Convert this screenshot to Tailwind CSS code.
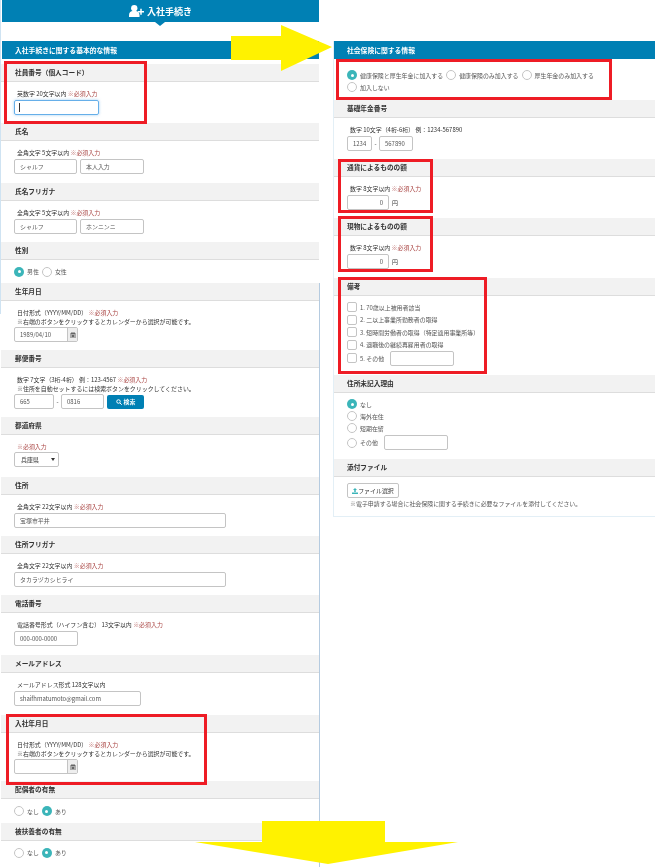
<!DOCTYPE html>
<html lang="ja">
<head>
    <meta charset="UTF-8">
    <meta name="viewport" content="width=device-width, initial-scale=1.0">
    <title>入社手続き</title>
    <script src="https://cdn.jsdelivr.net/npm/@tailwindcss/browser@4"></script>
</head>
<body class="bg-white">
    <div class="relative w-[655px] h-[867px] overflow-hidden flex font-['Noto_Sans_CJK_JP','Noto_Sans',sans-serif] text-[5.95px] leading-[9px] text-[#333] blur-[0.35px]">

        <!-- Left column -->
        <div class="w-[319px] pl-[1px] shrink-0">
            <div class="relative h-[22px] ml-[1px] bg-[#0080b4] flex items-center justify-center gap-[3px] text-white font-bold text-[9px]">
                <svg viewBox="0 0 20 16" class="w-[15px] h-[12px] fill-white"><circle cx="7" cy="4.2" r="4.2"/><path d="M0 16v-2.5C0 10 2.5 8 5 8h4c2.5 0 5 2 5 5.500V16z"/><path d="M15 5h2v3h3v2h-3v3h-2v-3h-3V8h3z"/></svg>
                <span>入社手続き</span>
                <div class="absolute left-[153px] top-[22px] w-0 h-0 border-x-[5px] border-x-transparent border-t-[4px] border-t-[#0080b4]"></div>
            </div>
            <div class="mt-[19px] h-[18px] ml-[1px] bg-[#0080b4] text-white font-bold text-[6.8px] flex items-center pl-[13px]">入社手続きに関する基本的な情報</div>

            <!-- 社員番号 -->
            <div class="mt-[5px] h-[18px] bg-[#f2f2f2] border-b border-[#ddd] pl-[14px] flex items-center font-bold text-[6.7px]">社員番号（個人コード）</div>
            <div class="h-[41px] pl-[13px] pt-[7px]">
                <p class="pl-[3px]">英数字 20文字以内 <span class="text-[#a94442]">※必須入力</span></p>
                <div class="mt-[2px] w-[85px] h-[15px] border border-[#66afe9] rounded-[2px] shadow-[0_0_3px_rgba(102,175,233,0.6)] flex items-center pl-[4px]"><div class="w-px h-[9px] bg-[#333]"></div></div>
            </div>

            <!-- 氏名 -->
            <div class="h-[18px] bg-[#f2f2f2] border-b border-[#ddd] pl-[14px] flex items-center font-bold text-[6.7px]">氏名</div>
            <div class="h-[42px] pl-[13px] pt-[7px]">
                <p class="pl-[3px]">全角文字 5文字以内 <span class="text-[#a94442]">※必須入力</span></p>
                <div class="mt-[2px] flex gap-[3px]">
                    <input value="シャルフ" class="w-[63px] h-[15px] border border-[#c4c4c4] rounded-[2px] px-[5px] text-[#555]">
                    <input value="本人入力" class="w-[64px] h-[15px] border border-[#c4c4c4] rounded-[2px] px-[5px] text-[#555]">
                </div>
            </div>

            <!-- 氏名フリガナ -->
            <div class="h-[18px] bg-[#f2f2f2] border-b border-[#ddd] pl-[14px] flex items-center font-bold text-[6.7px]">氏名フリガナ</div>
            <div class="h-[41px] pl-[13px] pt-[7px]">
                <p class="pl-[3px]">全角文字 5文字以内 <span class="text-[#a94442]">※必須入力</span></p>
                <div class="mt-[2px] flex gap-[3px]">
                    <input value="シャルフ" class="w-[63px] h-[15px] border border-[#c4c4c4] rounded-[2px] px-[5px] text-[#555]">
                    <input value="ホンニンニ" class="w-[64px] h-[15px] border border-[#c4c4c4] rounded-[2px] px-[5px] text-[#555]">
                </div>
            </div>

            <!-- 性別 -->
            <div class="h-[18px] bg-[#f2f2f2] border-b border-[#ddd] pl-[14px] flex items-center font-bold text-[6.7px]">性別</div>
            <div class="h-[23px] pl-[13px] flex items-center gap-[3px] text-[#555]">
                <span class="w-[10px] h-[10px] rounded-full bg-[#3bb5b9] flex items-center justify-center"><span class="w-[3px] h-[3px] rounded-full bg-white"></span></span>
                <span>男性</span>
                <span class="w-[10px] h-[10px] rounded-full border border-[#c4c4c4]"></span>
                <span>女性</span>
            </div>

            <!-- 生年月日 -->
            <div class="h-[18px] bg-[#f2f2f2] border-b border-[#ddd] pl-[14px] flex items-center font-bold text-[6.7px]">生年月日</div>
            <div class="h-[49px] pl-[13px] pt-[7px]">
                <p class="pl-[3px]">日付形式（YYYY/MM/DD） <span class="text-[#a94442]">※必須入力</span></p>
                <p class="pl-[3px]">※右端のボタンをクリックするとカレンダーから選択が可能です。</p>
                <div class="mt-[1px] w-[64px] h-[15px] border border-[#c4c4c4] rounded-[2px] flex">
                    <input value="1989/04/10" class="w-[52px] px-[5px] text-[#555]">
                    <div class="flex-1 bg-[#eee] border-l border-[#c4c4c4] flex items-center justify-center">
                        <svg viewBox="0 0 12 12" class="w-[6px] h-[6px] fill-[#666]"><path d="M1 2h2V0h2v2h2V0h2v2h2v10H1zm1 3v6h8V5z"/><path d="M3 6h6v4H3z"/></svg>
                    </div>
                </div>
            </div>

            <!-- 郵便番号 -->
            <div class="h-[18px] bg-[#f2f2f2] border-b border-[#ddd] pl-[14px] flex items-center font-bold text-[6.7px]">郵便番号</div>
            <div class="h-[49px] pl-[13px] pt-[7px]">
                <p class="pl-[3px]">数字 7文字（3桁-4桁） 例：123-4567 <span class="text-[#a94442]">※必須入力</span></p>
                <p class="pl-[3px]">※住所を自動セットするには検索ボタンをクリックしてください。</p>
                <div class="mt-[1px] flex items-center">
                    <input value="665" class="w-[40px] h-[15px] border border-[#c4c4c4] rounded-[2px] px-[5px] text-[#555]">
                    <span class="w-[7px] text-center">-</span>
                    <input value="0816" class="w-[43px] h-[15px] border border-[#c4c4c4] rounded-[2px] px-[5px] text-[#555]">
                    <button class="ml-[3px] w-[37px] h-[14px] rounded-[2px] bg-[#0080b4] text-white font-bold flex items-center justify-center gap-[2px]">
                        <svg viewBox="0 0 12 12" class="w-[6px] h-[6px] fill-none stroke-white stroke-[2]"><circle cx="5" cy="5" r="3.500"/><path d="M8 8l3.500 3.500"/></svg>
                        <span>検索</span>
                    </button>
                </div>
            </div>

            <!-- 都道府県 -->
            <div class="h-[18px] bg-[#f2f2f2] border-b border-[#ddd] pl-[14px] flex items-center font-bold text-[6.7px]">都道府県</div>
            <div class="h-[42px] pl-[13px] pt-[7px]">
                <p class="pl-[3px] text-[#a94442]">※必須入力</p>
                <div class="relative mt-[1px] w-[45px] h-[15px]">
                    <select class="appearance-none w-full h-full border border-[#c4c4c4] rounded-[2px] pl-[6px] text-[#333]"><option>兵庫県</option></select>
                    <div class="absolute right-[4px] top-[6px] w-0 h-0 border-x-[2px] border-x-transparent border-t-[3px] border-t-[#333]"></div>
                </div>
            </div>

            <!-- 住所 -->
            <div class="h-[18px] bg-[#f2f2f2] border-b border-[#ddd] pl-[14px] flex items-center font-bold text-[6.7px]">住所</div>
            <div class="h-[41px] pl-[13px] pt-[7px]">
                <p class="pl-[3px]">全角文字 22文字以内 <span class="text-[#a94442]">※必須入力</span></p>
                <input value="宝塚市平井" class="mt-[2px] w-[212px] h-[15px] border border-[#c4c4c4] rounded-[2px] px-[5px] text-[#555]">
            </div>

            <!-- 住所フリガナ -->
            <div class="h-[18px] bg-[#f2f2f2] border-b border-[#ddd] pl-[14px] flex items-center font-bold text-[6.7px]">住所フリガナ</div>
            <div class="h-[41px] pl-[13px] pt-[7px]">
                <p class="pl-[3px]">全角文字 22文字以内 <span class="text-[#a94442]">※必須入力</span></p>
                <input value="タカラヅカシヒライ" class="mt-[2px] w-[212px] h-[15px] border border-[#c4c4c4] rounded-[2px] px-[5px] text-[#555]">
            </div>

            <!-- 電話番号 -->
            <div class="h-[18px] bg-[#f2f2f2] border-b border-[#ddd] pl-[14px] flex items-center font-bold text-[6.7px]">電話番号</div>
            <div class="h-[42px] pl-[13px] pt-[7px]">
                <p class="pl-[3px]">電話番号形式（ハイフン含む） 13文字以内 <span class="text-[#a94442]">※必須入力</span></p>
                <input value="000-000-0000" class="mt-[2px] w-[64px] h-[15px] border border-[#c4c4c4] rounded-[2px] px-[5px] text-[#555]">
            </div>

            <!-- メールアドレス -->
            <div class="h-[18px] bg-[#f2f2f2] border-b border-[#ddd] pl-[14px] flex items-center font-bold text-[6.7px]">メールアドレス</div>
            <div class="h-[42px] pl-[13px] pt-[7px]">
                <p class="pl-[3px]">メールアドレス形式 128文字以内</p>
                <input value="shaifhmatumoto@gmail.com" class="mt-[2px] w-[127px] h-[15px] border border-[#c4c4c4] rounded-[2px] px-[5px] text-[#555]">
            </div>

            <!-- 入社年月日 -->
            <div class="h-[18px] bg-[#f2f2f2] border-b border-[#ddd] pl-[14px] flex items-center font-bold text-[6.7px]">入社年月日</div>
            <div class="h-[48px] pl-[13px] pt-[7px]">
                <p class="pl-[3px]">日付形式（YYYY/MM/DD） <span class="text-[#a94442]">※必須入力</span></p>
                <p class="pl-[3px]">※右端のボタンをクリックするとカレンダーから選択が可能です。</p>
                <div class="mt-[1px] w-[64px] h-[15px] border border-[#c4c4c4] rounded-[2px] flex">
                    <input class="w-[52px] px-[5px] text-[#555]">
                    <div class="flex-1 bg-[#eee] border-l border-[#c4c4c4] flex items-center justify-center">
                        <svg viewBox="0 0 12 12" class="w-[6px] h-[6px] fill-[#666]"><path d="M1 2h2V0h2v2h2V0h2v2h2v10H1zm1 3v6h8V5z"/><path d="M3 6h6v4H3z"/></svg>
                    </div>
                </div>
            </div>

            <!-- 配偶者の有無 -->
            <div class="h-[18px] bg-[#f2f2f2] border-b border-[#ddd] pl-[14px] flex items-center font-bold text-[6.7px]">配偶者の有無</div>
            <div class="h-[24px] pl-[13px] flex items-center gap-[3px] text-[#555]">
                <span class="w-[10px] h-[10px] rounded-full border border-[#c4c4c4]"></span>
                <span>なし</span>
                <span class="w-[10px] h-[10px] rounded-full bg-[#3bb5b9] flex items-center justify-center"><span class="w-[3px] h-[3px] rounded-full bg-white"></span></span>
                <span>あり</span>
            </div>

            <!-- 被扶養者の有無 -->
            <div class="h-[18px] bg-[#f2f2f2] border-b border-[#ddd] pl-[14px] flex items-center font-bold text-[6.7px]">被扶養者の有無</div>
            <div class="h-[23px] pl-[13px] flex items-center gap-[3px] text-[#555]">
                <span class="w-[10px] h-[10px] rounded-full border border-[#c4c4c4]"></span>
                <span>なし</span>
                <span class="w-[10px] h-[10px] rounded-full bg-[#3bb5b9] flex items-center justify-center"><span class="w-[3px] h-[3px] rounded-full bg-white"></span></span>
                <span>あり</span>
            </div>
        </div>

        <!-- Right column -->
        <div class="ml-[14px] w-[322px] h-[476px] mt-[41px] border-l border-b border-[#e3eff6]">
            <div class="h-[18px] bg-[#0080b4] text-white font-bold text-[6.8px] flex items-center pl-[13px]">社会保険に関する情報</div>
            <div class="h-[41px] pl-[13px] pt-[10px] text-[#555]">
                <div class="flex items-center gap-[3px] h-[12px]">
                    <span class="w-[10px] h-[10px] rounded-full bg-[#3bb5b9] flex items-center justify-center"><span class="w-[3px] h-[3px] rounded-full bg-white"></span></span>
                    <span>健康保険と厚生年金に加入する</span>
                    <span class="w-[10px] h-[10px] rounded-full border border-[#c4c4c4]"></span>
                    <span>健康保険のみ加入する</span>
                    <span class="w-[10px] h-[10px] rounded-full border border-[#c4c4c4]"></span>
                    <span>厚生年金のみ加入する</span>
                </div>
                <div class="flex items-center gap-[3px] h-[12px]">
                    <span class="w-[10px] h-[10px] rounded-full border border-[#c4c4c4]"></span>
                    <span>加入しない</span>
                </div>
            </div>

            <!-- 基礎年金番号 -->
            <div class="h-[18px] bg-[#f2f2f2] border-b border-[#ddd] pl-[13px] flex items-center font-bold text-[6.7px]">基礎年金番号</div>
            <div class="h-[41px] pl-[13px] pt-[7px]">
                <p class="pl-[3px]">数字 10文字（4桁-6桁） 例：1234-567890</p>
                <div class="mt-[2px] flex items-center">
                    <input value="1234" class="w-[25px] h-[15px] border border-[#c4c4c4] rounded-[2px] px-[5px] text-[#555]">
                    <span class="w-[7px] text-center">-</span>
                    <input value="567890" class="w-[34px] h-[15px] border border-[#c4c4c4] rounded-[2px] px-[5px] text-[#555]">
                </div>
            </div>

            <!-- 通貨 -->
            <div class="h-[18px] bg-[#f2f2f2] border-b border-[#ddd] pl-[13px] flex items-center font-bold text-[6.7px]">通貨によるものの額</div>
            <div class="h-[41px] pl-[13px] pt-[7px]">
                <p class="pl-[3px]">数字 8文字以内 <span class="text-[#a94442]">※必須入力</span></p>
                <div class="mt-[2px] flex items-center gap-[3px]">
                    <input value="0" class="w-[42px] h-[15px] border border-[#c4c4c4] rounded-[2px] px-[5px] text-right text-[#555]">
                    <span>円</span>
                </div>
            </div>

            <!-- 現物 -->
            <div class="h-[18px] bg-[#f2f2f2] border-b border-[#ddd] pl-[13px] flex items-center font-bold text-[6.7px]">現物によるものの額</div>
            <div class="h-[42px] pl-[13px] pt-[7px]">
                <p class="pl-[3px]">数字 8文字以内 <span class="text-[#a94442]">※必須入力</span></p>
                <div class="mt-[2px] flex items-center gap-[3px]">
                    <input value="0" class="w-[42px] h-[15px] border border-[#c4c4c4] rounded-[2px] px-[5px] text-right text-[#555]">
                    <span>円</span>
                </div>
            </div>

            <!-- 備考 -->
            <div class="h-[18px] bg-[#f2f2f2] border-b border-[#ddd] pl-[13px] flex items-center font-bold text-[6.7px]">備考</div>
            <div class="h-[79px] pl-[13px] pt-[5px] text-[#555]">
                <div class="flex items-center gap-[3px] h-[12px]"><span class="w-[10px] h-[10px] rounded-[2px] border border-[#c4c4c4]"></span><span>1. 70歳以上被用者該当</span></div>
                <div class="flex items-center gap-[3px] h-[12px] mt-[0.5px]"><span class="w-[10px] h-[10px] rounded-[2px] border border-[#c4c4c4]"></span><span>2. 二以上事業所勤務者の取得</span></div>
                <div class="flex items-center gap-[3px] h-[12px] mt-[0.5px]"><span class="w-[10px] h-[10px] rounded-[2px] border border-[#c4c4c4]"></span><span>3. 短時間労働者の取得（特定適用事業所等）</span></div>
                <div class="flex items-center gap-[3px] h-[12px] mt-[0.5px]"><span class="w-[10px] h-[10px] rounded-[2px] border border-[#c4c4c4]"></span><span>4. 退職後の継続再雇用者の取得</span></div>
                <div class="flex items-center gap-[3px] h-[15px]">
                    <span class="w-[10px] h-[10px] rounded-[2px] border border-[#c4c4c4]"></span>
                    <span>5. その他</span>
                    <input class="ml-[3px] w-[64px] h-[15px] border border-[#c4c4c4] rounded-[2px]">
                </div>
            </div>

            <!-- 住所未記入理由 -->
            <div class="h-[18px] bg-[#f2f2f2] border-b border-[#ddd] pl-[13px] flex items-center font-bold text-[6.7px]">住所未記入理由</div>
            <div class="h-[66px] pl-[13px] pt-[5px] text-[#555]">
                <div class="flex items-center gap-[3px] h-[12px]"><span class="w-[10px] h-[10px] rounded-full bg-[#3bb5b9] flex items-center justify-center"><span class="w-[3px] h-[3px] rounded-full bg-white"></span></span><span>なし</span></div>
                <div class="flex items-center gap-[3px] h-[12px]"><span class="w-[10px] h-[10px] rounded-full border border-[#c4c4c4]"></span><span>海外在住</span></div>
                <div class="flex items-center gap-[3px] h-[12px]"><span class="w-[10px] h-[10px] rounded-full border border-[#c4c4c4]"></span><span>短期在留</span></div>
                <div class="mt-[1px] flex items-center gap-[3px] h-[15px]">
                    <span class="w-[10px] h-[10px] rounded-full border border-[#c4c4c4]"></span>
                    <span>その他</span>
                    <input class="ml-[3px] w-[64px] h-[15px] border border-[#c4c4c4] rounded-[2px]">
                </div>
            </div>

            <!-- 添付ファイル -->
            <div class="h-[18px] bg-[#f2f2f2] border-b border-[#ddd] pl-[13px] flex items-center font-bold text-[6.7px]">添付ファイル</div>
            <div class="pl-[13px] pt-[6px]">
                <button class="w-[52px] h-[15px] border border-[#c4c4c4] rounded-[2px] flex items-center justify-center text-[#333]">
                    <svg viewBox="0 0 12 12" class="w-[6px] h-[6px] fill-[#3bb5b9]"><path d="M6 0l4 4H7.500v4h-3V4H2zM0 9h12v3H0z"/></svg>
                    <span>ファイル選択</span>
                </button>
                <p class="mt-[1px] pl-[3px] text-[#555]">※電子申請する場合に社会保険に関する手続きに必要なファイルを添付してください。</p>
            </div>
        </div>

        <!-- Screenshot seams -->
        <div class="absolute left-0 top-0 w-[1px] h-[314px] bg-[#cfe3f2]"></div>
        <div class="absolute left-[319px] top-[283px] w-[1px] h-[584px] bg-[#b5cbe0]"></div>

        <!-- Red annotation boxes -->
        <div class="absolute left-[4px] top-[61px] w-[143px] h-[63px] border-[3px] border-[#ee1c25]"></div>
        <div class="absolute left-[6px] top-[714px] w-[201px] h-[71px] border-[3px] border-[#ee1c25]"></div>
        <div class="absolute left-[336px] top-[59px] w-[276px] h-[41px] border-[3px] border-[#ee1c25]"></div>
        <div class="absolute left-[338px] top-[159px] w-[95px] h-[54px] border-[3px] border-[#ee1c25]"></div>
        <div class="absolute left-[338px] top-[216px] w-[95px] h-[56px] border-[3px] border-[#ee1c25]"></div>
        <div class="absolute left-[338px] top-[277px] w-[149px] h-[97px] border-[3px] border-[#ee1c25]"></div>

        <!-- Yellow arrows -->
        <svg class="absolute left-0 top-0 w-[655px] h-[867px] pointer-events-none" viewBox="0 0 655 867">
            <path d="M231 36h50V25l51 22-51 24V60h-50z" fill="#fff200"/>
            <path d="M262 821h123v21h73l-130 22-133-22h67z" fill="#fff200"/>
        </svg>
    </div>
</body>
</html>
